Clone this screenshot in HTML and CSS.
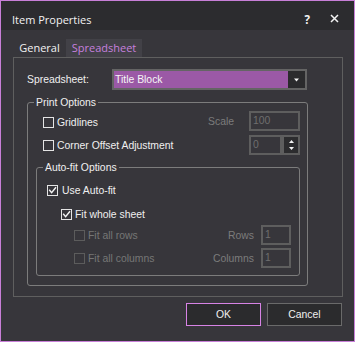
FILE: index.html
```html
<!DOCTYPE html>
<html>
<head>
<meta charset="utf-8">
<link rel="stylesheet" href="styles.css">
</head>
<body>
<div class="dialog">
  <div class="titlebar">
    <span class="title">Item Properties</span>
    <span class="help">?</span>
    <span class="close"><svg width="9" height="9" viewBox="0 0 9 9"><path d="M1 1L8 8M8 1L1 8" stroke="#f4f4f4" stroke-width="1.5" fill="none"/></svg></span>
  </div>
  <div class="tabs">
    <div class="tab tab-general">General</div>
    <div class="tab tab-active">Spreadsheet</div>
  </div>
  <div class="panel">
    <div class="field-row">
      <span class="field-label">Spreadsheet:</span>
      <div class="combo">
        <span class="combo-value">Title Block</span>
        <span class="combo-btn"><svg width="7" height="4" viewBox="0 0 7 4"><path d="M1 0.5H6L3.5 3.5Z" fill="#f4f4f4"/></svg></span>
      </div>
    </div>
    <fieldset class="group group-print">
      <legend>Print Options</legend>
      <div class="opt-row row-first">
        <span class="check check-lowered"><span class="box"></span>Gridlines</span>
        <span class="right-pair"><span class="dim-label">Scale</span><span class="input input-scale">100</span></span>
      </div>
      <div class="opt-row row-second">
        <span class="check"><span class="box"></span>Corner Offset Adjustment</span>
        <span class="spin"><span class="input input-spin">0</span><span class="spin-btn"><svg width="7" height="14" viewBox="0 0 7 14"><path d="M1 5H6L3.5 2Z" fill="#f4f4f4"/><path d="M1 9H6L3.5 12Z" fill="#f4f4f4"/></svg></span></span>
      </div>
      <fieldset class="group group-autofit">
        <legend>Auto-fit Options</legend>
        <div class="af-row af-a">
          <span class="check"><span class="box"><svg width="9" height="9" viewBox="0 0 9 9"><path d="M1.2 3.8L3.6 6.6L8 1.2" stroke="#f4f4f4" stroke-width="1.4" fill="none"/></svg></span>Use Auto-fit</span>
        </div>
        <div class="af-row af-b">
          <span class="check"><span class="box"><svg width="9" height="9" viewBox="0 0 9 9"><path d="M1.2 3.8L3.6 6.6L8 1.2" stroke="#f4f4f4" stroke-width="1.4" fill="none"/></svg></span>Fit whole sheet</span>
        </div>
        <div class="af-row af-c">
          <span class="check disabled"><span class="box"></span>Fit all rows</span>
          <span class="right-pair"><span class="dim-label">Rows</span><span class="input input-small">1</span></span>
        </div>
        <div class="af-row af-d">
          <span class="check disabled"><span class="box"></span>Fit all columns</span>
          <span class="right-pair"><span class="dim-label">Columns</span><span class="input input-small">1</span></span>
        </div>
      </fieldset>
    </fieldset>
  </div>
  <div class="actions">
    <button class="btn btn-primary">OK</button>
    <button class="btn">Cancel</button>
  </div>
</div>
</body>
</html>
```

FILE: styles.css
```css
* { box-sizing: border-box; }
html, body { margin: 0; padding: 0; background: #37363b; }
body {
  font-family: "Liberation Sans", Arial, sans-serif;
  font-size: 10.4px;
  color: #f0f0f0;
}
.dialog {
  width: 355px;
  height: 342px;
  border: 1px solid #c87fd8;
  background: #37363b;
  display: flex;
  flex-direction: column;
}
.titlebar {
  flex: none;
  height: 29px;
  background: #2c2c2f;
  display: flex;
  align-items: center;
  padding: 7px 0 0 11px;
  font-family: "Open Sans", sans-serif;
  font-size: 11px;
  color: #f2f2f2;
}
.title { flex: 1; }
.help { font-weight: bold; font-size: 11.5px; margin-right: 20px; }
.close { width: 9px; height: 9px; display: flex; margin-right: 15px; margin-top: -1px; }
.tabs {
  flex: none;
  height: 27px;
  display: flex;
  align-items: flex-end;
  padding-left: 12px;
  font-family: "Open Sans", sans-serif;
  font-size: 11px;
}
.tab { height: 18px; line-height: 18px; text-align: center; }
.tab-general { width: 53px; color: #f2f2f2; }
.tab-active { width: 76px; background: #424147; color: #c680de; }
.panel {
  flex: none;
  height: 240px;
  margin: 0 11px 0 12px;
  border: 1px solid #5f5f5f;
  padding: 11px 0 0 13px;
}
.field-row { display: flex; align-items: center; height: 21px; }
.field-label { width: 85px; }
.combo {
  width: 195px;
  height: 21px;
  border: 2px solid #646464;
  display: flex;
}
.combo-value {
  flex: 1;
  background: #9b59a6;
  padding-left: 1px;
  line-height: 17px;
  color: #f6f6f6;
}
.combo-btn {
  width: 17px;
  background: #2b2b2d;
  display: flex;
  align-items: center;
  justify-content: center;
}
.group {
  margin: 0;
  padding: 0;
  border: 1px solid #7c7c7c;
  border-radius: 3px;
  min-width: 0;
}
.group legend {
  margin-left: 6px;
  padding: 0 2px;
  line-height: 13px;
}
.group-print { width: 281px; margin-top: 6px; padding: 2px 0 9px 0; }
.opt-row {
  display: flex;
  align-items: center;
  justify-content: space-between;
  height: 20px;
  padding: 0 7px 0 15px;
}
.row-second { margin-top: 4px; }
.check { display: flex; align-items: center; }
.check-lowered { margin-top: 3px; }
.box {
  width: 11px;
  height: 11px;
  border: 1px solid #e4e4e4;
  margin-right: 3px;
  display: flex;
  align-items: center;
  justify-content: center;
}
.check.disabled { color: #767676; }
.check.disabled .box { border-color: #5c5c5c; }
.right-pair { display: flex; align-items: center; }
.dim-label { color: #7c7c7c; }
.input {
  height: 20px;
  border: 2px solid #5e5e5e;
  color: #6e6e6e;
  line-height: 16px;
  padding-left: 2px;
}
.input-scale { width: 51px; margin-left: 15px; }
.spin { display: flex; }
.input-spin { width: 33px; }
.spin-btn {
  width: 18px;
  height: 20px;
  border: 2px solid #5e5e5e;
  background: #2c2c2e;
  display: flex;
  align-items: center;
  justify-content: center;
}
.group-autofit { margin: 6px 7px 0 8px; padding: 6px 8px 7px 0; }
.af-row { display: flex; align-items: center; justify-content: space-between; height: 20px; }
.af-a { padding-left: 10px; }
.af-a .box { margin-right: 4px; }
.af-b { padding-left: 24px; margin-top: 4px; }
.af-c { padding-left: 37px; margin-top: 1px; }
.af-d { padding-left: 37px; margin-top: 3px; }
.input-small { width: 30px; margin-left: 7px; }
.actions {
  flex: none;
  display: flex;
  justify-content: flex-end;
  gap: 6px;
  margin-top: 6px;
  padding-right: 12px;
}
.btn {
  width: 75px;
  height: 23px;
  margin: 0;
  padding: 0;
  background: #2b2b2d;
  border: 1px solid #6a6a6a;
  color: #f0f0f0;
  font-family: "Liberation Sans", Arial, sans-serif;
  font-size: 10.4px;
}
.btn-primary { border-color: #d783e5; }
```
